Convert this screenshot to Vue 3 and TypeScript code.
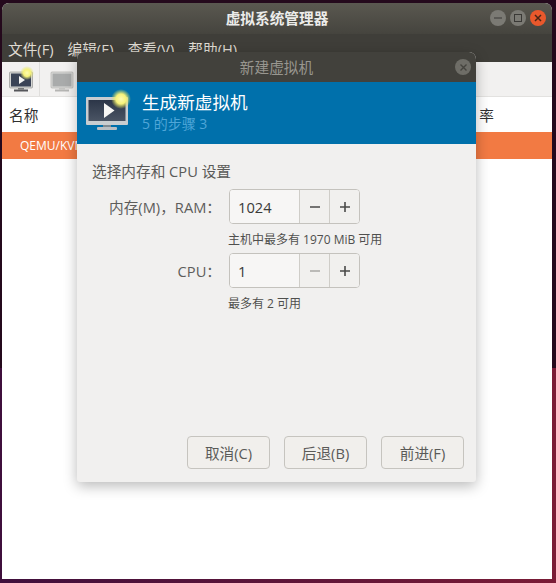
<script setup lang="ts">
const menus: string[] = ['文件(F)', '编辑(E)', '查看(V)', '帮助(H)']
const spins = [
  { label: '内存(M)，RAM：', value: '1024', hint: '主机中最多有 1970 MiB 可用', minusOff: false },
  { label: 'CPU：', value: '1', hint: '最多有 2 可用', minusOff: true },
]
const buttons: string[] = ['取消(C)', '后退(B)', '前进(F)']
</script>

<template>
  <div class="desktop">
    <div class="window">
      <header class="titlebar">
        <div class="title">虚拟系统管理器</div>
        <div class="controls">
          <span class="ctl"><svg width="10" height="10" viewBox="0 0 10 10"><path d="M1 5h8" stroke="#3a3936" stroke-width="1.2"/></svg></span>
          <span class="ctl"><svg width="10" height="10" viewBox="0 0 10 10"><rect x="1.5" y="1.5" width="7" height="7" fill="none" stroke="#3a3936" stroke-width="1"/></svg></span>
          <span class="ctl close"><svg width="10" height="10" viewBox="0 0 10 10"><path d="M2 2l6 6M8 2l-6 6" stroke="#4a2515" stroke-width="1.5"/></svg></span>
        </div>
      </header>
      <nav class="menubar">
        <span v-for="m in menus" :key="m" class="menu">{{ m }}</span>
      </nav>
      <div class="toolbar">
        <div class="tool">
          <svg class="tool-icon" width="24" height="25" viewBox="0 0 24 25">
            <defs>
              <radialGradient id="glowSmall">
                <stop offset="0" stop-color="#fdfbb0"/>
                <stop offset="0.5" stop-color="#f6f27a"/>
                <stop offset="1" stop-color="#e2e468" stop-opacity="0"/>
              </radialGradient>
            </defs>
            <rect x="0.5" y="5" width="23" height="16" rx="1" fill="#d5d6d4" stroke="#8a8a88" stroke-width="0.6"/>
            <rect x="2" y="6.500" width="20" height="13" fill="#3a4356"/>
            <path d="M10 9l6 4-6 4z" fill="#f4f4f2"/>
            <rect x="9" y="21" width="6" height="1.500" fill="#77787a"/>
            <rect x="5" y="22.500" width="14" height="2" fill="#55565a"/>
            <circle cx="18" cy="6" r="7" fill="url(#glowSmall)"/>
          </svg>
        </div>
        <div class="tool second">
          <svg class="tool-icon" width="24" height="25" viewBox="0 0 24 25">
            <rect x="1" y="5" width="22" height="16" rx="1" fill="#dcdcda" stroke="#a5a5a3" stroke-width="0.6"/>
            <rect x="2.500" y="6.500" width="19" height="13" fill="#a9abab"/>
            <rect x="9" y="21" width="6" height="1.500" fill="#c4c4c2"/>
            <rect x="5" y="22.500" width="14" height="2" fill="#b5b5b3"/>
          </svg>
        </div>
      </div>
      <div class="columns">
        <span>名称</span>
        <span>率</span>
      </div>
      <div class="row-selected">QEMU/KVM</div>
    </div>

    <section class="dialog">
      <header class="dlg-title">
        <span class="dlg-name">新建虚拟机</span>
        <span class="dlg-close"><svg width="9" height="9" viewBox="0 0 9 9"><path d="M1.500 1.500l6 6M7.500 1.500l-6 6" stroke="#45443f" stroke-width="1.400"/></svg></span>
      </header>
      <div class="banner">
        <svg class="banner-icon" width="46" height="46" viewBox="0 0 46 46">
          <defs>
            <radialGradient id="glow">
              <stop offset="0" stop-color="#fdfbb0"/>
              <stop offset="0.5" stop-color="#f6f27a"/>
              <stop offset="1" stop-color="#d8dc55" stop-opacity="0"/>
            </radialGradient>
            <linearGradient id="screen" x1="0" y1="0" x2="0" y2="1">
              <stop offset="0" stop-color="#2c3648"/>
              <stop offset="1" stop-color="#4a5464"/>
            </linearGradient>
          </defs>
          <rect x="1" y="11" width="42" height="28" rx="1" fill="#c9cdd0"/>
          <rect x="3.500" y="14" width="37" height="21" fill="url(#screen)"/>
          <path d="M19 17l10.500 7.500-10.500 7.500z" fill="#f7f7f5"/>
          <rect x="18" y="39" width="8" height="2" fill="#7f8a92"/>
          <rect x="12" y="41" width="20" height="3" rx="1" fill="#b9bfc4"/>
          <circle cx="36" cy="13" r="10" fill="url(#glow)"/>
        </svg>
        <div class="banner-text">
          <div class="banner-title">生成新虚拟机</div>
          <div class="banner-sub">5 的步骤 3</div>
        </div>
      </div>
      <div class="body">
        <div class="section-title">选择内存和 CPU 设置</div>
        <div class="form">
          <template v-for="s in spins" :key="s.label">
            <label class="lbl">{{ s.label }}</label>
            <div class="spin">
              <span class="spin-value">{{ s.value }}</span>
              <span class="spin-btn" :class="{ off: s.minusOff }">
                <svg width="10" height="10" viewBox="0 0 10 10"><path d="M0 5h10" stroke="currentColor" stroke-width="1.600"/></svg>
              </span>
              <span class="spin-btn">
                <svg width="10" height="10" viewBox="0 0 10 10"><path d="M0 5h10M5 0v10" stroke="currentColor" stroke-width="1.600"/></svg>
              </span>
            </div>
            <span></span>
            <div class="hint">{{ s.hint }}</div>
          </template>
        </div>
      </div>
      <footer class="actions">
        <button v-for="b in buttons" :key="b" class="btn" type="button">{{ b }}</button>
      </footer>
    </section>
  </div>
</template>

<style>
html, body { margin: 0; padding: 0; }
</style>

<style scoped>
.desktop {
  position: relative;
  width: 556px;
  height: 583px;
  overflow: hidden;
  background:
    linear-gradient(180deg, #24091c 368px, transparent 368px),
    linear-gradient(90deg, #3f0f3c 0%, #7a1b36 100%);
  font-family: "Open Sans", "Noto Sans CJK SC", sans-serif;
}
.window {
  position: absolute;
  left: 2px;
  top: 3px;
  width: 550px;
  height: 576px;
  background: #fff;
  border-radius: 7px 7px 0 0;
  overflow: hidden;
  display: flex;
  flex-direction: column;
}
.titlebar {
  height: 31px;
  flex: none;
  display: flex;
  align-items: center;
  justify-content: center;
  position: relative;
  background: linear-gradient(180deg, #5a5850 0%, #45443e 100%);
}
.title {
  color: #ececea;
  font-size: 14.67px;
  font-weight: 700;
  margin-top: -2px;
}
.controls {
  position: absolute;
  right: 6px;
  top: 7px;
  display: flex;
  gap: 4px;
}
.ctl {
  width: 16px;
  height: 16px;
  border-radius: 50%;
  background: #7b7a74;
  display: flex;
  align-items: center;
  justify-content: center;
}
.ctl.close { background: #e9582c; }
.menubar {
  height: 28px;
  flex: none;
  display: flex;
  align-items: center;
  gap: 14px;
  padding-left: 6px;
  background: #3f3e39;
}
.menu {
  color: #dfdbd2;
  font-size: 14.67px;
  white-space: nowrap;
  margin-top: 0;
}
.toolbar {
  height: 35px;
  flex: none;
  display: flex;
  background: #f2f1f0;
  border-bottom: 1px solid #e3e2e0;
  box-sizing: border-box;
}
.tool {
  width: 38px;
  display: flex;
  align-items: center;
  justify-content: center;
  border-right: 1px solid #dfdedc;
  box-sizing: border-box;
}
.tool.second { width: 44px; border-right: 0; }
.tool-icon { overflow: visible; }
.columns {
  height: 35px;
  flex: none;
  display: flex;
  align-items: center;
  justify-content: space-between;
  padding: 0 58px 0 7px;
  font-size: 14.67px;
  color: #2f2f2f;
  background: #fff;
}
.row-selected {
  height: 27px;
  flex: none;
  line-height: 27px;
  padding-left: 18px;
  font-size: 12px;
  color: #fff;
  background: #f27a43;
}
.dialog {
  position: absolute;
  left: 77px;
  top: 52px;
  width: 399px;
  height: 430px;
  background: #f1f0ef;
  border-radius: 7px 7px 3px 3px;
  box-shadow: 0 4px 14px rgba(0, 0, 0, 0.28);
  display: flex;
  flex-direction: column;
}
.dlg-title {
  height: 30px;
  flex: none;
  position: relative;
  display: flex;
  align-items: center;
  justify-content: center;
  background: #42413c;
  border-radius: 7px 7px 0 0;
}
.dlg-name {
  color: #98968f;
  font-size: 14.67px;
  margin-top: -2px;
}
.dlg-close {
  position: absolute;
  right: 5px;
  top: 7px;
  width: 16px;
  height: 16px;
  border-radius: 50%;
  background: #6e6d67;
  display: flex;
  align-items: center;
  justify-content: center;
}
.banner {
  height: 62px;
  flex: none;
  display: flex;
  align-items: flex-start;
  background: #0070ab;
}
.banner-icon {
  margin: 4px 0 0 8px;
  flex: none;
  overflow: visible;
}
.banner-text {
  margin-left: 11px;
  padding-top: 8px;
}
.banner-title {
  color: #fff;
  font-size: 17.6px;
  line-height: 24px;
}
.banner-sub {
  color: #4fa6d8;
  font-size: 14px;
  line-height: 20px;
}
.body {
  flex: 1;
  padding: 17px 15px 0;
}
.section-title {
  font-size: 14.67px;
  line-height: 20px;
  color: #5a5a58;
}
.form {
  display: grid;
  grid-template-columns: 137px 1fr;
  margin-top: 8px;
  column-gap: 0;
  align-items: center;
}
.lbl {
  font-size: 14.67px;
  color: #5d5d5b;
  text-align: right;
  padding-right: 8px;
  white-space: nowrap;
}
.spin {
  width: 131px;
  height: 35px;
  box-sizing: border-box;
  border: 1px solid #c4c2bd;
  border-radius: 4px;
  background: #fff;
  display: flex;
  align-items: stretch;
  overflow: hidden;
}
.spin-value {
  flex: 1;
  padding-left: 8px;
  font-size: 14.67px;
  line-height: 35px;
  color: #3a3a38;
  background: #f7f6f5;
}
.spin-btn {
  width: 30px;
  flex: none;
  box-sizing: border-box;
  border-left: 1px solid #cfcdc8;
  background: #f1f0ee;
  color: #4a4a48;
  display: flex;
  align-items: center;
  justify-content: center;
}
.spin-btn.off { color: #a9a8a4; }
.hint {
  font-size: 12px;
  line-height: 16px;
  color: #4f4f4d;
  margin: 8px 0 5px -1px;
}
.actions {
  flex: none;
  display: flex;
  justify-content: flex-end;
  gap: 14px;
  padding: 0 12px 13px 0;
}
.btn {
  width: 83px;
  height: 33px;
  padding: 0;
  font-family: inherit;
  font-size: 14.67px;
  color: #5a5a58;
  background: #f1efec;
  border: 1px solid #c6c4bf;
  border-radius: 4px;
}
</style>
